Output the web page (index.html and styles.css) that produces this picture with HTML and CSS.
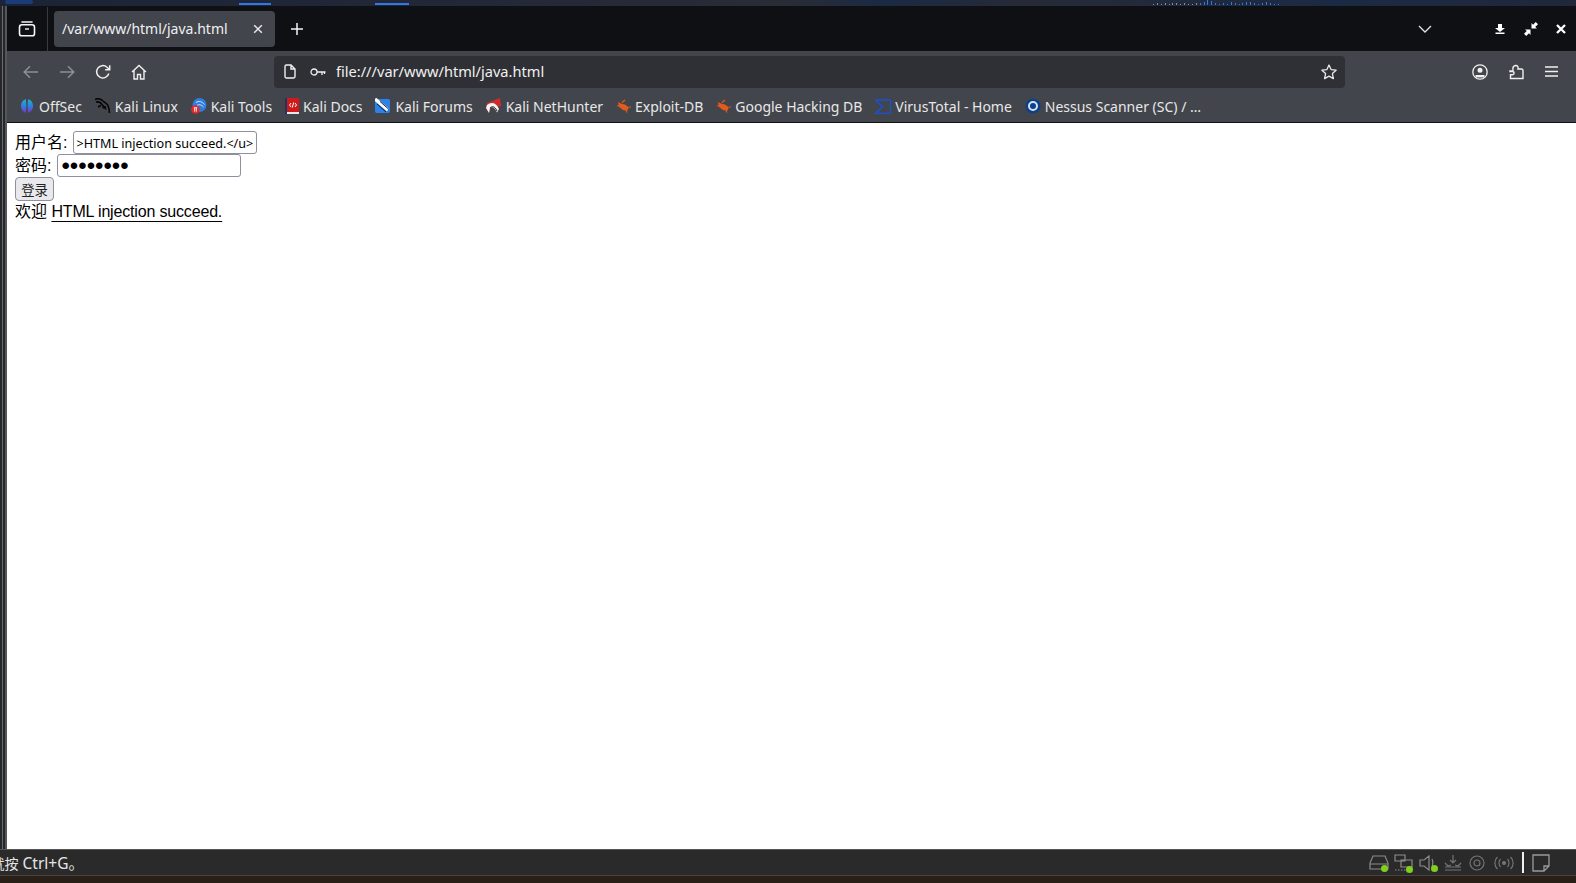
FILE: index.html
```html
<!DOCTYPE html>
<html lang="zh">
<head>
<meta charset="utf-8">
<title>/var/www/html/java.html</title>
<link rel="stylesheet" href="styles.css">
</head>
<body>
<div class="wallpaper-top">
  <span class="wp-start"></span>
  <span class="task t1"></span>
  <span class="task t2"></span>
  <span class="graph">
    <i style="height:1px"></i><i style="height:2px"></i><i style="height:1px"></i><i style="height:2px"></i><i style="height:1px"></i><i style="height:2px"></i><i style="height:2px"></i><i style="height:1px"></i><i style="height:2px"></i><i style="height:1px"></i><i style="height:1px"></i><i style="height:2px"></i><i class="b" style="height:2px"></i><i class="b" style="height:3px"></i><i class="b" style="height:5px"></i><i class="b" style="height:4px"></i><i class="b" style="height:2px"></i><i class="b" style="height:1px"></i><i class="b" style="height:2px"></i><i class="b" style="height:1px"></i><i class="b" style="height:3px"></i><i class="b" style="height:2px"></i><i class="b" style="height:1px"></i><i class="b" style="height:2px"></i><i class="b" style="height:3px"></i><i class="b" style="height:3px"></i><i class="b" style="height:2px"></i><i class="b" style="height:1px"></i><i class="b" style="height:2px"></i><i class="b" style="height:3px"></i><i class="b" style="height:2px"></i><i class="b" style="height:1px"></i><i class="b" style="height:1px"></i>
  </span>
</div>
<div class="desktop">
  <div class="window">
    <div class="titlebar">
      <div class="tabview">
        <svg width="18" height="18" viewBox="0 0 18 18" fill="none" stroke="#f4f4f4" stroke-width="1.6"><rect x="1.5" y="4.8" width="15" height="11" rx="2.4"/><path d="M4 2h10" stroke-linecap="round"/><path d="M7 9h4" stroke-width="1.4"/></svg>
      </div>
      <div class="tab">
        <span class="tab-title">/var/www/html/java.html</span>
        <svg width="10" height="10" viewBox="0 0 10 10" stroke="#e8e8e8" stroke-width="1.5"><path d="M1.2 1.2l7.6 7.6M8.8 1.2L1.2 8.8"/></svg>
      </div>
      <svg class="newtab" width="14" height="14" viewBox="0 0 14 14" stroke="#f4f4f4" stroke-width="1.5"><path d="M7 1v12M1 7h12"/></svg>
      <div class="title-spacer"></div>
      <svg class="tablist" width="14" height="8" viewBox="0 0 14 8" fill="none" stroke="#e4e4e4" stroke-width="1.3"><path d="M1 1l6 6 6-6"/></svg>
      <div class="winbtns">
        <svg width="12" height="12" viewBox="0 0 12 12" fill="#fff"><path d="M4 1h4v4h3L6 9 1 5h3zM1.500 9.500h9V11h-9z"/></svg>
        <svg width="14" height="14" viewBox="0 0 14 14" fill="#fff"><path d="M6.500 7.500V13L5 11.200 2.200 14 0 11.800 2.800 9 1 7.500zM7.500 6.500V1L9 2.800 11.800 0 14 2.200 11.200 5 13 6.500z"/></svg>
        <svg width="10" height="10" viewBox="0 0 10 10" stroke="#fff" stroke-width="2.300"><path d="M1 1l8 8M9 1L1 9"/></svg>
      </div>
    </div>
    <div class="toolbar">
      <div class="navbtns">
        <svg width="16" height="14" viewBox="0 0 16 14" fill="none" stroke="#8d8f94" stroke-width="1.500"><path d="M15 7H1.500M7 1.200L1.200 7 7 12.800"/></svg>
        <svg width="16" height="14" viewBox="0 0 16 14" fill="none" stroke="#8d8f94" stroke-width="1.500"><path d="M1 7h13.500M9 1.200L14.800 7 9 12.800"/></svg>
        <svg width="16" height="16" viewBox="0 0 16 16" fill="none" stroke="#f0f0f0" stroke-width="1.500"><path d="M13.800 9.500A6.200 6.200 0 1 1 12 3.200L14.500 5.500"/><path d="M14.700 1.200v4.600h-4.600"/></svg>
        <svg width="16" height="16" viewBox="0 0 16 16" fill="none" stroke="#f0f0f0" stroke-width="1.400"><path d="M1 8l7-6.500L15 8M3 6.500V15h3.500v-4.500h3V15H13V6.500"/></svg>
      </div>
      <div class="urlbar">
        <svg width="12" height="15" viewBox="0 0 12 15" fill="none" stroke="#efefef" stroke-width="1.400"><path d="M1 2.500A1.500 1.500 0 0 1 2.500 1H7l4 4v7.500a1.500 1.500 0 0 1-1.500 1.500h-7A1.500 1.500 0 0 1 1 12.500zM7 1v4h4"/></svg>
        <svg class="key" width="16" height="10" viewBox="0 0 16 10" fill="none" stroke="#efefef" stroke-width="1.300"><circle cx="4" cy="5" r="3"/><path d="M7 5h8.500M12 5v3M14.500 5v2"/></svg>
        <span class="url">file:///var/www/html/java.html</span>
        <svg width="16" height="16" viewBox="0 0 16 16" fill="none" stroke="#e8e8e8" stroke-width="1.300" stroke-linejoin="round"><path d="M8 1l2.100 4.600 5 .6-3.700 3.400 1 5L8 12.100 3.600 14.600l1-5L.9 6.200l5-.6z"/></svg>
      </div>
      <div class="toolbtns">
        <svg width="16" height="16" viewBox="0 0 16 16" fill="none" stroke="#f0f0f0" stroke-width="1.300"><circle cx="8" cy="8" r="7.200"/><circle cx="8" cy="6.200" r="2.500" fill="#f0f0f0" stroke="none"/><path d="M3.500 11h9v2.400h-9z" fill="#f0f0f0" stroke="none"/></svg>
        <svg width="15" height="16" viewBox="0 0 15 16" fill="none" stroke="#f0f0f0" stroke-width="1.400"><path d="M1 7h2.200a1 1 0 0 0 .8-1.500C3.600 4 4 2 6.500 1.500c2-.3 3 1.500 2.500 3.500h3.500a1.500 1.500 0 0 1 1.500 1.500v8H1.500v-3.800H3.500a1.500 1.500 0 0 0 0-3.200H1z"/></svg>
        <svg width="13" height="11" viewBox="0 0 13 11" stroke="#f0f0f0" stroke-width="1.300"><path d="M0 1h13M0 5.500h13M0 10h13"/></svg>
      </div>
    </div>
    <div class="bookmarks">
      <a class="bm"><svg width="16" height="16" viewBox="0 0 16 16"><defs><linearGradient id="off" x1="0" y1="0" x2="0" y2="1"><stop offset="0" stop-color="#19b5c9"/><stop offset=".5" stop-color="#2f80e0"/><stop offset="1" stop-color="#7a34c8"/></linearGradient></defs><path d="M6.800 1A7.500 7.500 0 0 0 6.800 15C7.600 11 7.600 5 6.800 1z" fill="url(#off)"/><path d="M9.200 1A7.500 7.500 0 0 1 9.200 15C8.400 11 8.400 5 9.200 1z" fill="url(#off)"/></svg>OffSec</a>
      <a class="bm"><svg width="16" height="16" viewBox="0 0 16 16" fill="none" stroke="#050505" stroke-width="1.500"><path d="M0 1.500c3-1.500 6-.5 8 1.500s4 2.500 5 4.500c.8 2 1.500 4 1.300 7.500"/><path d="M1 4c3-.5 5 .8 6 2.500s3 3 4 5"/><path d="M6 7.500L3 9M11 8.500L7.500 10"/></svg>Kali Linux</a>
      <a class="bm"><svg width="16" height="16" viewBox="0 0 16 16"><circle cx="8.500" cy="7" r="7" fill="#2f7de0"/><path d="M5 4.500c3-2 6-1 8.500 2M6 7.500c2-1.500 4-1 6.500 1.500" fill="none" stroke="#d8e9fb" stroke-width="1"/><circle cx="4.500" cy="11.500" r="4.300" fill="#e22a2a"/><path d="M2.800 9.800h3.400M3.700 9.800v3.800M5.300 9.800v3.800" stroke="#fff" stroke-width=".9"/></svg>Kali Tools</a>
      <a class="bm"><svg width="14" height="16" viewBox="0 0 14 16"><path d="M0 0h3v16H0z" fill="#1c3566"/><path d="M2 0h12v14H2z" fill="#d01a1a"/><path d="M2 14h12v2H2z" fill="#e8e8e8"/><path d="M6 5L4.500 7 6 9M10 5l1.500 2L10 9M8.700 4.500L7.300 9.500" stroke="#fff" fill="none" stroke-width="1"/></svg>Kali Docs</a>
      <a class="bm"><svg width="16" height="16" viewBox="0 0 16 16"><rect x="0" y="1" width="15" height="14" rx="2" fill="#2c82e8"/><path d="M0 1l13 11" stroke="#fff" stroke-width="3.500"/><path d="M2 6l9 8M5 3.500l9 8" stroke="#10151c" stroke-width=".9"/></svg>Kali Forums</a>
      <a class="bm"><svg width="16" height="16" viewBox="0 0 16 16"><path d="M1 5L14 0l1 8-4 1C10 6 7 6 5 9L3 15 0 10z" fill="#d22a2a"/><path d="M1 7c4-3.500 9-3 12 4l-2 3.500c-2-5-5-6.500-7-4.500l-1 5-3-5z" fill="#f5f5f5"/><path d="M4 10c2-2 5-2 7 3" fill="none" stroke="#1a1a1a" stroke-width="1"/></svg>Kali NetHunter</a>
      <a class="bm"><svg width="15" height="16" viewBox="0 0 15 16"><path d="M2 4l3 1.500 4 1 4 3-2 3.500-4-1L3 9z" fill="#e25b1c"/><path d="M6 4.500l3-2.500M1 8l2.500-.5M10 12.500l1 2M13 9l2 0" stroke="#e25b1c" stroke-width="1.200"/></svg>Exploit-DB</a>
      <a class="bm"><svg width="15" height="16" viewBox="0 0 15 16"><path d="M2 4l3 1.500 4 1 4 3-2 3.500-4-1L3 9z" fill="#e25b1c"/><path d="M6 4.500l3-2.500M1 8l2.500-.5M10 12.500l1 2M13 9l2 0" stroke="#e25b1c" stroke-width="1.200"/></svg>Google Hacking DB</a>
      <a class="bm"><svg width="16" height="15" viewBox="0 0 16 15" fill="none" stroke="#1a50d8" stroke-width="1.500"><path d="M15.500 1H.5l7 6.500-7 7h15z"/></svg>VirusTotal - Home</a>
      <a class="bm"><svg width="16" height="16" viewBox="0 0 16 16" fill="none"><circle cx="8" cy="8" r="7.500" fill="#0f3f86"/><circle cx="8" cy="8" r="4" stroke="#cfe3f5" stroke-width="2"/></svg>Nessus Scanner (SC) / …</a>
    </div>
    <main class="page">
      <form>
        <div class="row"><label>用户名:</label><input class="field" type="text" value=">HTML injection succeed.</u>"></div>
        <div class="row"><label>密码:</label><input class="field pw" type="password" value="12345678"></div>
        <div class="row btn-row"><button class="submit" type="button">登录</button></div>
        <div class="greeting">欢迎 <u>HTML injection succeed.</u></div>
      </form>
    </main>
  </div>
</div>
<footer class="statusbar">
  <span class="status-text"><span class="status-cjk">就按</span> Ctrl+G。</span>
  <div class="tray">
    <span class="ti"><svg width="20" height="16" viewBox="0 0 20 16" fill="none" stroke="#8b8b8b" stroke-width="1.200"><path d="M4 1h12l3 7v6H1V8zM1 9h18"/></svg><i class="dot"></i></span>
    <span class="ti"><svg width="20" height="18" viewBox="0 0 20 18" fill="none" stroke="#8b8b8b" stroke-width="1.200"><path d="M1 1h10v6H1zM7 6h11v7H7z"/><path d="M1 16h12" stroke-dasharray="1.500 1.500"/></svg><i class="dot"></i></span>
    <span class="ti"><svg width="18" height="16" viewBox="0 0 18 16" fill="none" stroke="#8b8b8b" stroke-width="1.200"><path d="M1 5h4l5-4v14l-5-4H1zM13 4c1 2 1 5 0 8"/></svg><i class="dot"></i></span>
    <span class="ti"><svg width="18" height="16" viewBox="0 0 18 16" fill="none" stroke="#747474" stroke-width="1.200"><path d="M9 0v8M6 5l3 3 3-3M1 8l3 3 3-1M17 8l-3 3-3-1M1 12h16M1 15h16"/></svg></span>
    <span class="ti"><svg width="16" height="16" viewBox="0 0 16 16" fill="none" stroke="#747474" stroke-width="1.200"><circle cx="8" cy="8" r="7"/><circle cx="8" cy="8" r="3"/></svg></span>
    <span class="ti"><svg width="20" height="14" viewBox="0 0 20 14" fill="none" stroke="#747474" stroke-width="1.200"><circle cx="10" cy="7" r="1.500" fill="#747474"/><path d="M6.500 3c-2 2-2 6 0 8M13.500 3c2 2 2 6 0 8M3.500 1c-3.500 3-3.500 9 0 12M16.500 1c3.500 3 3.500 9 0 12"/></svg></span>
    <span class="tray-sep"></span>
    <svg width="18" height="18" viewBox="0 0 18 18" fill="none" stroke="#9a9a9a" stroke-width="1.300"><path d="M1 1h16v11l-5 5H1zM17 12h-5v5"/></svg>
  </div>
</footer>
<div class="wallpaper-bottom"></div>
</body>
</html>
```
FILE: styles.css
```css
html, body { margin: 0; padding: 0; height: 100%; overflow: hidden; }
body {
  display: flex; flex-direction: column; width: 1576px; height: 883px;
  background: #2b2c33;
  font-family: "Liberation Sans", "Noto Sans CJK SC", sans-serif;
}
svg { display: block; flex: none; }

.wallpaper-top {
  height: 6px; flex: none; display: flex; align-items: flex-end;
  background: linear-gradient(90deg, #1b2436 0%, #232838 30%, #2a2c36 50%, #1a2a44 56%, #262a36 65%, #1b2a44 85%, #20283a 100%);
  position: relative;
}
.wp-start { width: 28px; height: 4px; margin: 0 0 2px 5px; background: #1c3c78; border-radius: 2px; }
.task { position: absolute; bottom: 1px; height: 2px; background: #2f78e6; }
.t1 { left: 239px; width: 32px; }
.t2 { left: 375px; width: 34px; }
.graph { position: absolute; left: 1153px; bottom: 1px; display: flex; align-items: flex-end; gap: 2.900px; }
.graph i { display: block; width: 1px; background: #888c94; }
.graph i.b { background: #2f78e6; }

.desktop {
  flex: 1; min-height: 0; display: flex; padding-left: 7px;
  background: linear-gradient(90deg, #26272b 0 2px, #6a6b70 2px 3px, #26272b 3px 5px, #55565a 5px 7px);
}
.window { flex: 1; min-width: 0; display: flex; flex-direction: column; }

.titlebar {
  height: 45px; flex: none; display: flex; align-items: center;
  background: #0e1014; color: #f4f4f4;
  font-family: "Noto Sans", sans-serif;
}
.tabview { width: 40px; height: 44px; flex: none; display: flex; align-items: center; justify-content: center; border-right: 1px solid #3a3b40; margin-right: 6px; }
.tab {
  width: 221px; height: 36px; flex: none; box-sizing: border-box; padding: 0 12px 0 8px;
  display: flex; align-items: center; justify-content: space-between;
  background: #42454c; border-radius: 4px; font-size: 14px;
}
.tab-title { color: #f0f0f0; padding-bottom: 1px; }
.newtab { margin-left: 15px; }
.title-spacer { flex: 1; }
.tablist { margin-right: 62px; }
.winbtns { display: flex; align-items: center; gap: 18px; margin-right: 10px; }

.toolbar { height: 41px; flex: none; display: flex; align-items: center; background: #42454c; }
.navbtns { display: flex; align-items: center; gap: 20px; margin-left: 16px; width: 251px; }
.urlbar {
  width: 1071px; height: 32px; flex: none; box-sizing: border-box; padding: 0 8px 0 10px;
  display: flex; align-items: center; background: #2f3035; border-radius: 4px;
  color: #f0f0f0; font: 14.600px "Noto Sans", sans-serif;
}
.key { margin-left: 14px; margin-right: 10px; }
.url { flex: 1; padding-bottom: 1px; }
.toolbtns { display: flex; align-items: center; gap: 21px; margin-left: 127px; }

.bookmarks {
  height: 31px; flex: none; box-sizing: border-box; padding: 0 0 2px 12px;
  display: flex; align-items: center; gap: 12.900px;
  background: #42454c; border-bottom: 1px solid #0e1014;
  font: 14px "Noto Sans", sans-serif; color: #e8e8e8;
}
.bm { display: flex; align-items: center; gap: 4px; white-space: nowrap; }

.page { flex: 1; min-height: 0; background: #fff; padding: 8px; color: #000; font-size: 16px; line-height: 18px; }
.row { height: 23px; display: flex; align-items: center; gap: 6px; }
.btn-row { height: 24px; }
.greeting { height: 23px; line-height: 21px; }
.field {
  box-sizing: border-box; width: 184px; height: 23px; padding: 1px 2px 0; margin: 0;
  border: 1px solid #8f8f9d; border-radius: 3px; background: #fff; color: #000;
  font: 12.600px "Noto Sans", sans-serif;
}
.pw { font: 24px/19px "Liberation Sans", sans-serif; padding: 0 3px; }
.submit {
  box-sizing: border-box; height: 24px; width: 39px; padding: 0; margin: 0;
  border: 1px solid #8f8f9d; border-radius: 4px; background: #e9e9ed; color: #222;
  font: 13.333px "Noto Sans CJK SC", sans-serif;
}
u {
  letter-spacing: -0.170px; text-underline-offset: 4px;
  text-decoration-thickness: 1px; text-decoration-skip-ink: none;
}

.statusbar {
  height: 26px; flex: none; box-sizing: border-box; display: flex; align-items: center; justify-content: space-between;
  background: #2a2a2a; border-top: 1px solid #555; color: #e6e6e6; font: 15.500px "Noto Sans", "Noto Sans CJK SC", sans-serif;
}
.status-text { margin-left: -9.500px; white-space: nowrap; }
.status-cjk { font-size: 14px; }
.tray { display: flex; align-items: center; gap: 5px; margin-right: 26px; }
.ti { position: relative; display: block; width: 20px; }
.dot { position: absolute; right: 1px; bottom: -1px; width: 7px; height: 7px; border-radius: 50%; background: #7fd11a; }
.tray-sep { width: 2px; height: 21px; background: #f0f0f0; margin: 0 3px 0 3px; }
.wallpaper-bottom { height: 8px; flex: none; background: #2a1f17; border-top: 1px solid #444; box-sizing: border-box; }
```
